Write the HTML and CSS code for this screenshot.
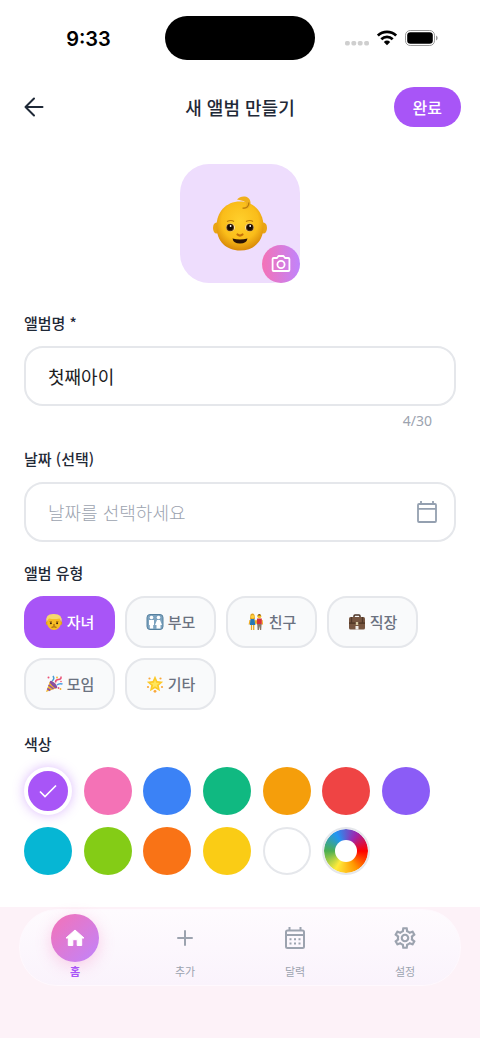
FILE: index.html
```html
<!DOCTYPE html>
<html lang="ko">
<head>
<meta charset="utf-8">
<meta name="viewport" content="width=device-width, initial-scale=1">
<title>새 앨범 만들기</title>
<link rel="stylesheet" href="styles.css">
</head>
<body>
<div class="status">
  <div class="status-side status-time">9:33</div>
  <div class="island"></div>
  <div class="status-side status-icons">
    <svg width="24" height="5" viewBox="0 0 24 5" fill="#cfcfcf"><rect width="4.800" height="4.400" rx="1.600"/><rect x="6.400" width="4.800" height="4.400" rx="1.600"/><rect x="12.800" width="4.800" height="4.400" rx="1.600"/><rect x="19.200" width="4.800" height="4.400" rx="1.600"/></svg>
    <svg width="20" height="16" viewBox="0 0 20 16" fill="none" stroke="#000" stroke-width="2.700"><path d="M.9 5.600a13.100 13.100 0 0 1 18.200 0"/><path d="M4.300 9.200a8.300 8.300 0 0 1 11.400 0"/><path d="M6.800 12a4.700 4.700 0 0 1 6.400 0L10 15.300z" fill="#000" stroke="none"/></svg>
    <svg width="33" height="16" viewBox="0 0 33 16"><rect x=".5" y=".5" width="29" height="15" rx="4.700" fill="none" stroke="#999"/><rect x="2.200" y="2.200" width="25.600" height="11.600" rx="3.200"/><path d="M31 5.500q1.700.8 1.700 2.500T31 10.500z" fill="#999"/></svg>
  </div>
</div>

<header class="topbar">
  <button class="back" type="button" aria-label="뒤로">
    <svg width="20" height="20" viewBox="0 0 20 20" fill="none" stroke="#1f2937" stroke-width="2" stroke-linecap="round" stroke-linejoin="round"><path d="M18.500 10H1.500M10 1.500 1.500 10l8.500 8.500"/></svg>
  </button>
  <h1 class="title">새 앨범 만들기</h1>
  <button class="done" type="submit" form="album">완료</button>
</header>

<form class="content" id="album">
  <button class="cover" type="button" aria-label="커버 변경">
    <svg width="56" height="56" viewBox="0 0 56 56">
      <defs>
        <radialGradient id="skin" cx=".5" cy=".4" r=".6"><stop offset="0" stop-color="#ffd02c"/><stop offset=".65" stop-color="#fabd1a"/><stop offset="1" stop-color="#d98a08"/></radialGradient>
      </defs>
      <ellipse cx="4.500" cy="32" rx="3.500" ry="5.500" fill="#eaa414"/><ellipse cx="51.500" cy="32" rx="3.500" ry="5.500" fill="#eaa414"/>
      <path d="M28 5.500C14 5.500 4.500 16 4.500 30.500S14 54.500 28 54.500s23.500-9.500 23.500-24S42 5.500 28 5.500z" fill="url(#skin)"/>
      <path d="M25 3.500C29-1 38-.5 38.500 6.500c.3 5-4.500 8-8 5.500 4-.5 5-4 2.500-6-2.200-1.800-5-1.500-8-2.500z" fill="#f0b01c"/>
      <path d="M30.500 12c4.200 1 6.500-2 6.300-5.500" fill="none" stroke="#b77a0c" stroke-width="1.200"/>
      <path d="M15 25.500q4-2 7 0M34 25.500q4-2 7 0" fill="none" stroke="#bb7b09" stroke-width="1.200"/>
      <ellipse cx="18.500" cy="31.500" rx="4.500" ry="3.900" fill="#f4e2b5"/><ellipse cx="37.500" cy="31.500" rx="4.500" ry="3.900" fill="#f4e2b5"/>
      <circle cx="18.200" cy="31.500" r="3.800" fill="#54300f"/><circle cx="37.800" cy="31.500" r="3.800" fill="#54300f"/>
      <circle cx="18.200" cy="31.300" r="2.800" fill="#160b03"/><circle cx="37.800" cy="31.300" r="2.800" fill="#160b03"/>
      <circle cx="18.600" cy="30" r=".9" fill="#fff"/><circle cx="38.200" cy="30" r=".9" fill="#fff"/>
      <path d="M25.500 38.500q2.500 2.200 5 0" fill="none" stroke="#c4700a" stroke-width="2.200" stroke-linecap="round"/>
      <path d="M20.500 42.500q7.500 2 15 0-.8 5-7.500 5t-7.500-5z" fill="#291306"/>
    </svg>
    <span class="camera">
      <svg width="20" height="20" viewBox="0 0 20 20" fill="none" stroke="#fff" stroke-width="1.800"><path d="M2.600 4H6l1.500-2h5L14 4h3.400q1 0 1 1v11q0 1-1 1H2.600q-1 0-1-1V5q0-1 1-1z" stroke-linejoin="round"/><circle cx="10" cy="10.500" r="3.600"/></svg>
    </span>
  </button>

  <label class="label" for="name">앨범명 *</label>
  <div class="field"><input class="input" id="name" type="text" maxlength="30" value="첫째아이"></div>
  <div class="counter">4/30</div>

  <label class="label label-date" for="date">날짜 (선택)</label>
  <div class="field">
    <input class="input" id="date" type="text" placeholder="날짜를 선택하세요">
    <svg width="22" height="24" viewBox="0 0 22 24" fill="none" stroke="#94a0b0" stroke-width="1.800"><rect x="2" y="4" width="18" height="18" rx="1"/><path d="M2 8.800h18M5 1v3M17 1v3"/></svg>
  </div>

  <fieldset class="group group-type">
    <legend class="label">앨범 유형</legend>
    <div class="chips">
      <label class="chip"><input class="hidden" type="radio" name="type" checked>
        <svg width="18" height="18" viewBox="0 0 18 18"><ellipse cx="2.300" cy="10" rx="1.500" ry="2" fill="#dfa019"/><ellipse cx="15.700" cy="10" rx="1.500" ry="2" fill="#dfa019"/><rect x="2.300" y="2" width="13.400" height="15" rx="6.600" fill="#f6bd24"/><path d="M1.500 9Q0 1 8 1q10-.5 8.500 8l-2-3.500Q9 6.500 4 5.500z" fill="#f5d76f"/><path d="M4.500 8.600h2.500M11 8.600h2.500" stroke="#a46d14" stroke-width=".8"/><circle cx="5.900" cy="10.200" r="1" fill="#3b220b"/><circle cx="12.100" cy="10.200" r="1" fill="#3b220b"/><path d="M6.500 14.300q2.500-1 5 0M8 12h2" fill="none" stroke="#854b0b" stroke-width=".9"/></svg>자녀</label>
      <label class="chip"><input class="hidden" type="radio" name="type">
        <svg width="18" height="18" viewBox="0 0 18 18"><rect x="1" y="1.500" width="16" height="15" rx="3" fill="#7da3bf" stroke="#55809f"/><g fill="#fff"><circle cx="5.500" cy="4.500" r="1.800"/><circle cx="12.500" cy="4.500" r="1.800"/><path d="M3 7h5v5H7.200v3.500H3.800V12H3zM11 7h3l2 5h-1.500v3.500h-4V12H9z"/></g></svg>부모</label>
      <label class="chip"><input class="hidden" type="radio" name="type">
        <svg width="18" height="18" viewBox="0 0 18 18"><path d="M3.500 1.500q2.500-2 4 .5L8 6H3z" fill="#e4a420"/><circle cx="5.600" cy="3.700" r="1.700" fill="#ffd23c"/><circle cx="12.300" cy="3.200" r="2" fill="#f9bf27"/><path d="M10.300 2.500q2-3 4 0z" fill="#75451b"/><path d="m3 7-.8 4.500M15 7l.5 4.500M8 7l1 4 1-4" fill="none" stroke="#f0ac22" stroke-width="1.200"/><path d="M3.500 6h4l.8 6H2.800z" fill="#2877b4"/><path d="M10 5.500h4.800v6H10z" fill="#d93236"/><path d="M4.500 12v5M6.700 12v5" stroke="#e9a824" stroke-width="1.300"/><path d="M10.200 11h4.400l-.4 6H13l-.5-4-.6 4h-1.300z" fill="#887767"/></svg>친구</label>
      <label class="chip"><input class="hidden" type="radio" name="type">
        <svg width="18" height="18" viewBox="0 0 18 18"><path d="M6 5V3q0-1 1-1h4q1 0 1 1v2" fill="none" stroke="#493326" stroke-width="1.500"/><rect x="1" y="4" width="16" height="12.500" rx="1.600" fill="#765540"/><path d="M1 9.500h16v1.200H1z" fill="#49311f"/><path d="M3.500 4v6M14.500 4v6" stroke="#513829" stroke-width="1.300"/><path d="M7.500 13h3v3.500h-3z" fill="#f2efec"/><path d="M7.800 9h2.400v3H7.800z" fill="#d6c7a1"/></svg>직장</label>
      <label class="chip"><input class="hidden" type="radio" name="type">
        <svg width="18" height="18" viewBox="0 0 18 18"><path d="m1 17 4-11q6 1 7 7z" fill="#efb42b"/><path d="m3.500 10 5 4M2.300 13.500l3 2M5 7l6 6" stroke="#9150ab" stroke-width="1.600"/><ellipse cx="8.600" cy="9.500" rx="1.700" ry="4.800" transform="rotate(-44 8.600 9.500)" fill="#8950a0"/><g fill="none" stroke-width="1.500"><path d="M7 6q3-2 1-5" stroke="#4a9ed4"/><path d="M10.500 7.500q0-3 3-3t2.500-3" stroke="#e94e75"/><path d="M12 10q2-2 5.500-1" stroke="#4b9fe6"/></g><g fill="#f4b02b"><circle cx="12" cy="2.500" r=".9"/><circle cx="15.500" cy="14" r=".9"/></g><g fill="#ed5377"><circle cx="3.500" cy="2.500" r="1"/><circle cx="13.500" cy="13" r=".9"/><circle cx="16" cy="6.500" r=".8"/></g></svg>모임</label>
      <label class="chip"><input class="hidden" type="radio" name="type">
        <svg width="18" height="18" viewBox="0 0 18 18"><g fill="#f9a83a"><circle cx="3.500" cy="3.500" r="1.100"/><circle cx="14.500" cy="3.500" r="1.100"/><circle cx="2" cy="12" r="1.100"/><circle cx="16" cy="12" r="1.100"/><circle cx="9" cy="16.300" r="1.400"/></g><path d="m9 .8 2.300 5.300 5.900.6-4.400 3.900 1.300 5.600L9 13.200l-5.100 3 1.300-5.600L.8 6.700l5.900-.6z" fill="#fcca28"/><path d="m9 4.500 1.200 3.200 3.300.3-2.600 2 .8 3L9 11.300 6.300 13l.8-3-2.600-2 3.300-.3z" fill="#ffe65b"/></svg>기타</label>
    </div>
  </fieldset>

  <fieldset class="group group-color">
    <legend class="label">색상</legend>
    <div class="swatches">
      <label class="swatch purple selected"><input class="hidden" type="radio" name="color" aria-label="보라" checked><svg width="18" height="14" viewBox="0 0 18 14" fill="none" stroke="#fff" stroke-width="1.700"><path d="m1 7.500 5 5L17 1.500"/></svg></label>
      <label class="swatch pink"><input class="hidden" type="radio" name="color" aria-label="분홍"></label>
      <label class="swatch blue"><input class="hidden" type="radio" name="color" aria-label="파랑"></label>
      <label class="swatch green"><input class="hidden" type="radio" name="color" aria-label="초록"></label>
      <label class="swatch amber"><input class="hidden" type="radio" name="color" aria-label="호박"></label>
      <label class="swatch red"><input class="hidden" type="radio" name="color" aria-label="빨강"></label>
      <label class="swatch violet"><input class="hidden" type="radio" name="color" aria-label="바이올렛"></label>
      <label class="swatch cyan"><input class="hidden" type="radio" name="color" aria-label="청록"></label>
      <label class="swatch lime"><input class="hidden" type="radio" name="color" aria-label="라임"></label>
      <label class="swatch orange"><input class="hidden" type="radio" name="color" aria-label="주황"></label>
      <label class="swatch yellow"><input class="hidden" type="radio" name="color" aria-label="노랑"></label>
      <label class="swatch white"><input class="hidden" type="radio" name="color" aria-label="하양"></label>
      <label class="swatch wheel"><input class="hidden" type="radio" name="color" aria-label="직접 선택"><span class="wheel-hole"></span></label>
    </div>
  </fieldset>
</form>

<footer class="dock">
  <nav class="nav">
    <a class="nav-item active" href="#home"><span class="nav-icon"><svg width="20" height="18" viewBox="0 0 20 18" fill="#fff" stroke="#fff" stroke-width="1" stroke-linejoin="round"><path d="M10 1 1 9h2.300v7.500h4.500v-5.800h4.400v5.800h4.500V9H19z"/></svg></span>홈</a>
    <a class="nav-item" href="#add"><span class="nav-icon"><svg width="16" height="16" viewBox="0 0 16 16" stroke="#9ca3af" stroke-width="2" stroke-linecap="round"><path d="M8 1v14M1 8h14"/></svg></span>추가</a>
    <a class="nav-item" href="#calendar"><span class="nav-icon"><svg width="20" height="22" viewBox="0 0 20 22" fill="none" stroke="#9ca3af" stroke-width="2"><rect x="1" y="3.500" width="18" height="17.500" rx="1.500"/><path d="M1 8h18M4.500 0v4M15.500 0v4"/><path d="M4.500 12.200h2m2.500 0h2m2.500 0h2M4.500 16.500h2m2.500 0h2m2.500 0h2"/></svg></span>달력</a>
    <a class="nav-item" href="#settings"><span class="nav-icon"><svg width="26" height="26" viewBox="0 0 24 24" fill="#9ca3af"><path d="M19.430 12.980c.04-.32.07-.64.07-.98s-.03-.66-.07-.98l2.110-1.650c.19-.15.24-.42.12-.64l-2-3.460c-.12-.22-.39-.3-.61-.22l-2.490 1c-.52-.4-1.080-.73-1.690-.98l-.38-2.650A.488.488 0 0 0 14 2h-4c-.25 0-.46.18-.49.42l-.38 2.650c-.61.25-1.170.59-1.690.98l-2.490-1c-.23-.09-.49 0-.61.22l-2 3.460c-.13.22-.07.49.12.64l2.110 1.650c-.04.32-.07.65-.07.98s.03.66.07.98l-2.110 1.650c-.19.15-.24.42-.12.64l2 3.460c.12.22.39.3.61.22l2.490-1c.52.4 1.080.73 1.690.98l.38 2.650c.03.24.24.42.49.42h4c.25 0 .46-.18.49-.42l.38-2.650c.61-.25 1.170-.59 1.690-.98l2.490 1c.23.09.49 0 .61-.22l2-3.460c.12-.22.07-.49-.12-.64l-2.110-1.650zm-1.980-1.710c.04.31.05.52.05.73 0 .21-.02.43-.05.73l-.14 1.130.89.7 1.080.84-.7 1.210-1.270-.51-1.040-.42-.9.680c-.43.32-.84.56-1.250.73l-1.060.43-.16 1.130-.2 1.350h-1.400l-.19-1.350-.16-1.130-1.060-.43c-.43-.18-.83-.41-1.230-.71l-.91-.7-1.060.43-1.270.51-.7-1.210 1.080-.84.89-.7-.14-1.130c-.03-.31-.05-.54-.05-.74s.02-.43.05-.73l.14-1.130-.89-.7-1.080-.84.7-1.210 1.270.51 1.040.42.900-.68c.43-.32.84-.56 1.250-.73l1.060-.43.16-1.130.2-1.350h1.390l.19 1.350.16 1.130 1.060.43c.43.18.83.41 1.230.71l.91.7 1.060-.43 1.270-.51.7 1.210-1.070.85-.89.7.14 1.130zM12 8c-2.210 0-4 1.790-4 4s1.790 4 4 4 4-1.790 4-4-1.790-4-4-4zm0 6c-1.100 0-2-.9-2-2s.9-2 2-2 2 .9 2 2-.9 2-2 2z"/></svg></span>설정</a>
  </nav>
</footer>
</body>
</html>
```

FILE: styles.css
```css
* { box-sizing: border-box; }

body {
  margin: 0;
  min-height: 100vh;
  display: flex;
  flex-direction: column;
  background: #fff;
  color: #1f2937;
  font-family: "Noto Sans CJK KR", sans-serif;
}

button, input { font-family: inherit; }
button { border: 0; padding: 0; cursor: pointer; }
svg { display: block; flex: none; }

.status {
  display: grid;
  grid-template-columns: 1fr auto 1fr;
  align-items: center;
  height: 76px;
}
.status-side {
  display: flex;
  justify-content: center;
  align-items: center;
}
.status-time {
  padding: 2px 0 0 12px;
  color: #000;
  font: 600 20px/24px Inter, sans-serif;
}
.status-icons { gap: 8px; padding-right: 12px; }
.status-icons svg:first-child { align-self: flex-end; }
.island {
  width: 150px;
  height: 44px;
  border-radius: 22px;
  background: #000;
}

.topbar {
  display: grid;
  grid-template-columns: 1fr auto 1fr;
  align-items: center;
  padding: 11px 19px;
}
.back { justify-self: start; padding-left: 5px; background: none; }
.title { margin: 0; font-size: 18px; line-height: 28px; font-weight: 500; }
.done {
  justify-self: end;
  height: 40px;
  padding: 0 19px;
  border-radius: 20px;
  background: #a855f7;
  color: #fff;
  font-size: 16px;
  font-weight: 500;
  line-height: 24px;
}

.content {
  flex: 1;
  display: flex;
  flex-direction: column;
  padding: 26px 24px 32px;
}

.cover {
  position: relative;
  align-self: center;
  display: grid;
  place-items: center;
  width: 120px;
  height: 119px;
  border-radius: 29px;
  background: #eeddfd;
}
.camera {
  position: absolute;
  right: 0;
  bottom: 0;
  display: grid;
  place-items: center;
  width: 38px;
  height: 38px;
  border-radius: 50%;
  background: linear-gradient(90deg, #f472b6, #c084fc);
}

.label {
  padding: 0;
  font-size: 15px;
  font-weight: 500;
  line-height: 24px;
}
.content > .label { margin: 28px 0 11px; }
.content > .label-date { margin: 16px 0 11px; }

.field {
  display: flex;
  align-items: center;
  height: 60px;
  padding: 0 16px 0 22px;
  border: 2px solid #e5e7eb;
  border-radius: 19px;
}
.input {
  flex: 1;
  min-width: 0;
  padding: 0;
  border: 0;
  outline: 0;
  background: none;
  color: #1c1c1e;
  font-size: 18px;
  line-height: 28px;
  font-weight: 400;
}
.input::placeholder { color: #9ca3af; opacity: 1; font-weight: 300; }
.counter {
  padding: 5px 24px 0 0;
  color: #9ca3af;
  text-align: right;
  font: 14px/20px "Noto Sans", sans-serif;
}

.group { min-width: 0; margin: 0; padding: 0; border: 0; }
.group-type { margin-top: 19px; }
.group-color { margin-top: 22px; }

.hidden { position: absolute; opacity: 0; pointer-events: none; }

.chips {
  display: flex;
  flex-wrap: wrap;
  gap: 10px;
  padding-top: 11px;
}
.chip {
  display: flex;
  align-items: center;
  justify-content: center;
  gap: 4px;
  height: 52px;
  width: 91px;
  border: 2px solid #e5e7eb;
  border-radius: 20px;
  background: #f9fafb;
  color: #6b7280;
  font-size: 15px;
  font-weight: 500;
  line-height: 22px;
}
.chip:has(:checked) { border-color: #a855f7; background: #a855f7; color: #fff; }

.swatches {
  display: grid;
  grid-template-columns: repeat(7, 48px);
  justify-content: space-between;
  row-gap: 12px;
  max-width: 406px;
  padding-top: 11px;
}
.swatch {
  display: grid;
  place-items: center;
  width: 48px;
  height: 48px;
  border-radius: 50%;
}
.selected { border: 4px solid #fff; box-shadow: 0 0 12px rgba(168, 85, 247, 0.4); }
.purple { background: #a855f7; }
.pink { background: #f472b6; }
.blue { background: #3b82f6; }
.green { background: #10b981; }
.amber { background: #f59e0b; }
.red { background: #ef4444; }
.violet { background: #8b5cf6; }
.cyan { background: #06b6d4; }
.lime { background: #84cc16; }
.orange { background: #f97316; }
.yellow { background: #facc15; }
.white { border: 2px solid #e5e7eb; background: #fff; }
.wheel {
  border: 2px solid #e5e7eb;
  background: conic-gradient(from 90deg, #f00, #ff9800, #ffeb3b, #4caf50, #2196f3, #9c27b0, #f00) padding-box;
}
.wheel-hole { width: 22px; height: 22px; border-radius: 50%; background: #fff; }

.dock { padding: 2px 19px 52px; background: #fdf2f8; }
.nav {
  display: flex;
  height: 77px;
  border: 1px solid #fff9fe;
  border-radius: 38px;
  background: linear-gradient(#fefbfe, #faf3fc);
}
.nav-item {
  flex: 1;
  display: flex;
  flex-direction: column;
  align-items: center;
  gap: 1px;
  padding-top: 4px;
  color: #9ca3af;
  font-size: 11px;
  line-height: 16px;
  text-decoration: none;
}
.nav-icon {
  display: grid;
  place-items: center;
  width: 48px;
  height: 48px;
  border-radius: 50%;
}
.active { color: #a855f7; font-weight: 700; }
.active .nav-icon {
  background: linear-gradient(135deg, #f472b6, #c084fc);
  box-shadow: 0 4px 16px rgba(244, 114, 182, 0.3);
}
```
